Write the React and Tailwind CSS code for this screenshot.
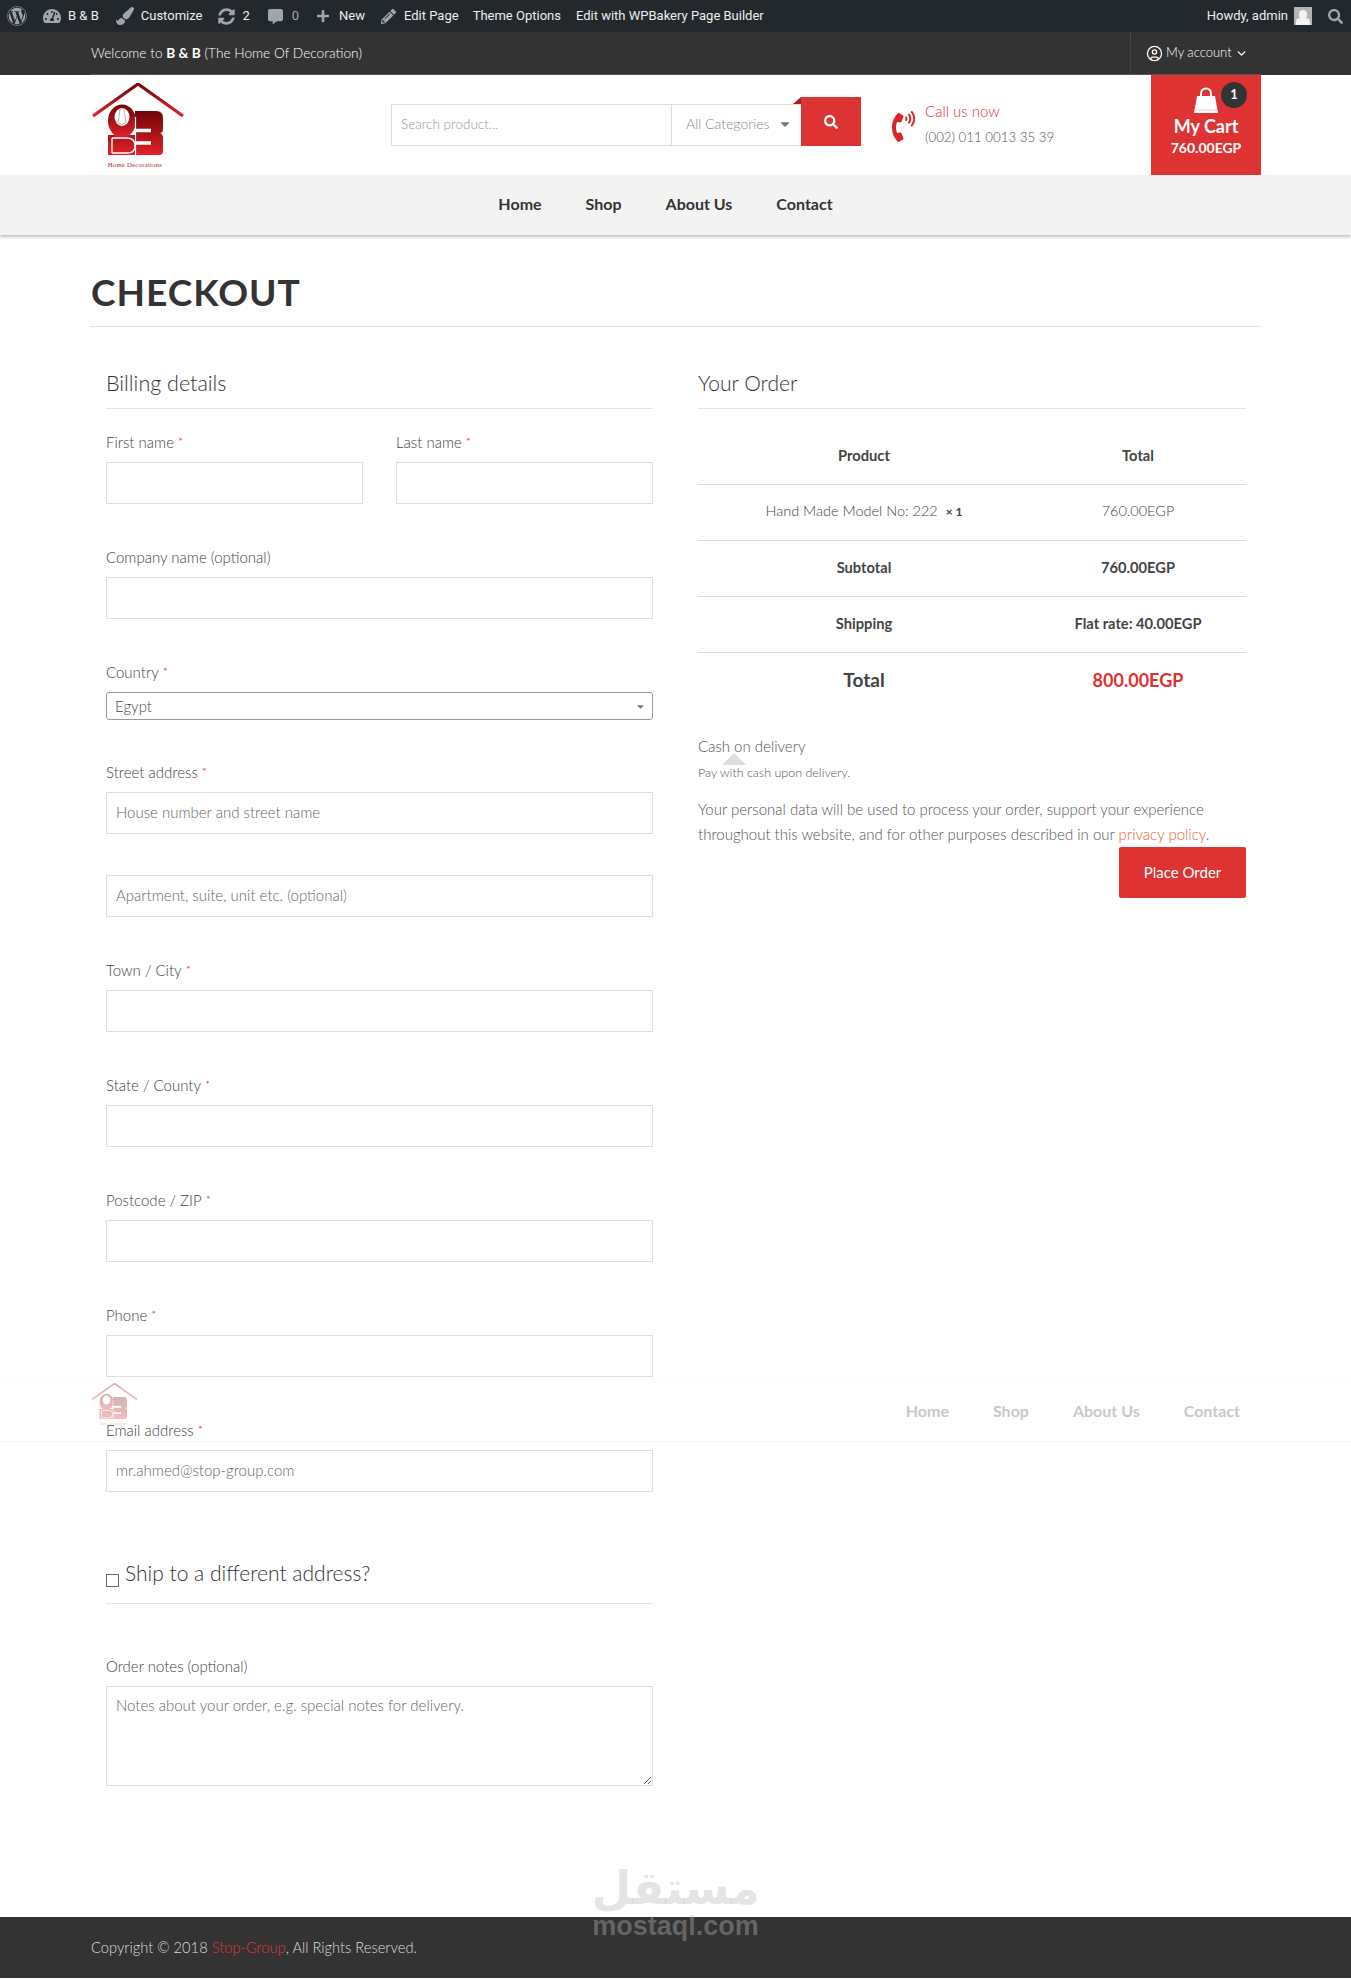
import React from 'react';
import { FaWordpress, FaTachometerAlt, FaPaintBrush, FaSyncAlt, FaCommentAlt, FaPlus, FaPencilAlt, FaSearch, FaPhoneVolume, FaCaretDown } from 'react-icons/fa';
import { CircleUser, ChevronDown } from 'lucide-react';

const inputCls = 'block w-full h-[42px] border border-[#dedede] bg-white px-[9px] pb-[2px] text-[15px] font-light text-[#666] placeholder:text-[#666] outline-none';

// Logo drawn from the header picture, used a second time faded in the sticky bar
const Logo = ({ id, className }) => (
    <svg viewBox="0 0 94 88" className={className}>
        <defs>
            <linearGradient id={id} x1="0" y1="0" x2="0" y2="1">
                <stop offset="0" stopColor="#6e0507" />
                <stop offset="1" stopColor="#e3212a" />
            </linearGradient>
        </defs>
        <path d="M2 33 L47 1 L92 33" fill="none" stroke={`url(#${id})`} strokeWidth="3.2" />
        <path d="M44 28 H65 Q72 28 72 35 V46 Q72 50 69 50 Q72 51 72 55 V68 Q72 72 68 72 H17 V52 H44 Z" fill={`url(#${id})`} />
        <ellipse cx="31" cy="38" rx="14" ry="16.5" fill={`url(#${id})`} />
        <ellipse cx="31" cy="34" rx="7.5" ry="9" fill="#fff" />
        <path d="M29 26 L27 40 Q31 43 35 40 L33 26 Z" fill="none" stroke="#aaa" strokeWidth="0.8" />
        <path d="M21 55 V70 M21 55 H36 Q44 55 44 63 Q44 70 36 70 H21" fill="none" stroke="#fff" strokeWidth="1.4" />
        <path d="M45 47.5 H60 M45 60 H60" stroke="#fff" strokeWidth="3.5" />
        <path d="M44.5 34 V72" stroke="#fff" strokeWidth="1.2" />
        <text x="44" y="84" textAnchor="middle" fontSize="6.6" letterSpacing="0.3" fill="#b3282d" fontFamily="'Liberation Serif', serif">Home Decorations</text>
    </svg>
);

const Field = ({ label, required, optional, className = 'mb-[43px]', children }) => (
    <div className={className}>
        <label className="block h-[22px] mb-2 text-[15px] leading-[20px] font-light text-[#444]">
            {label}
            {optional && ' (optional)'}
            {required && <span className="text-[#e01020] ml-1 relative top-[-2px] text-[12px]">*</span>}
        </label>
        {children || <input className={inputCls} />}
    </div>
);

const AdminBar = () => (
    <div className="h-[32px] bg-[#23282d] flex items-center text-[13px] text-[#eee] font-['Roboto',sans-serif]">
        <FaWordpress className="ml-[7px] text-[20px] text-[#a0a5aa]" />
        <FaTachometerAlt className="ml-[16px] text-[18px] text-[#a0a5aa]" />
        <span className="ml-[7px]">B &amp; B</span>
        <FaPaintBrush className="ml-[17px] text-[18px] text-[#a0a5aa]" />
        <span className="ml-[7px]">Customize</span>
        <FaSyncAlt className="ml-[16px] text-[17px] text-[#a0a5aa]" />
        <span className="ml-[7px]">2</span>
        <FaCommentAlt className="ml-[18px] text-[15px] text-[#a0a5aa]" />
        <span className="ml-[9px] text-[#a0a5aa]">0</span>
        <FaPlus className="ml-[17px] text-[14px] text-[#a0a5aa]" />
        <span className="ml-[9px]">New</span>
        <FaPencilAlt className="ml-[16px] text-[15px] text-[#a0a5aa]" />
        <span className="ml-[8px]">Edit Page</span>
        <span className="ml-[14px]">Theme Options</span>
        <span className="ml-[15px]">Edit with WPBakery Page Builder</span>
        <span className="ml-auto">Howdy, admin</span>
        <span className="relative ml-[6px] mr-px w-[18px] h-[18px] bg-[#b4b4b4] overflow-hidden">
            <span className="absolute left-[5px] top-[3px] w-[8px] h-[9px] rounded-full bg-[#f2f2f2]" />
            <span className="absolute left-[2px] top-[11px] w-[14px] h-[7px] rounded-t-[4px] bg-[#f2f2f2]" />
        </span>
        <FaSearch className="ml-[15px] mr-[8px] text-[15px] text-[#a0a5aa]" />
    </div>
);

const TopBar = () => (
    <div className="bg-[#333] h-[43px]">
        <div className="w-[1171px] mx-auto h-full flex items-center justify-between border-b border-[#555] text-[13.7px] text-white font-light">
            <span className="pl-px">Welcome to <b className="font-bold">B &amp; B</b> (The Home Of Decoration)</span>
            <span className="w-[131px] h-full border-l border-dotted border-[#555] flex items-center pl-[15px] gap-[3px]">
                <CircleUser size={17} strokeWidth={1.8} />
                <span className="text-[13px]">My account</span>
                <ChevronDown size={13} strokeWidth={2.5} />
            </span>
        </div>
    </div>
);

const CartBag = () => (
    <svg viewBox="0 0 26 28" className="w-[26px] h-[28px]">
        <path d="M8 12 V7 Q8 1.5 13 1.5 Q18 1.5 18 7 V12" fill="none" stroke="#fff" strokeWidth="2" />
        <path d="M4 9 H22 L25 26 H1 Z" fill="#fff" />
        <path d="M1.5 23 H24.5" stroke="#f6c8c8" strokeWidth="1" />
    </svg>
);

const Header = () => (
    <div className="w-[1171px] mx-auto h-[100px] flex">
        <Logo id="logo-main" className="w-[94px] h-[88px] mt-[8px] ml-px" />
        <div className="ml-[206px] mt-[22px] flex items-end h-[49px]">
            <div className="w-[281px] h-[42px] border border-[#e0dcd6] flex items-center pl-[9px] pb-[2px] text-[13.5px] font-light text-[#999]">Search product...</div>
            <div className="w-[129px] h-[42px] border-y border-[#e0dcd6] flex items-center pl-[14px] pb-[3px] text-[14px] font-light text-[#888]">
                All Categories
                <FaCaretDown className="ml-[8px] text-[#777] text-[14px]" />
            </div>
            <div className="relative w-[60px] h-[49px] bg-[#de3333] flex items-center justify-center text-white">
                <FaSearch className="text-[14px]" />
                <span className="absolute left-[-8px] top-0 w-0 h-0 border-l-[8px] border-l-transparent border-b-[7px] border-b-[#a81e1e]" />
            </div>
        </div>
        <div className="ml-[27px] mt-[25px] flex">
            <FaPhoneVolume className="text-[#d9252a] text-[31px] mt-[11px]" />
            <div className="ml-[6px] font-light">
                <div className="text-[15px] leading-[22px] text-[#e03535]">Call us now</div>
                <div className="text-[13.3px] leading-[22px] mt-[4px] text-[#555]">(002) 011 0013 35 39</div>
            </div>
        </div>
        <div className="ml-auto w-[110px] h-[100px] bg-[#de3333] text-white flex flex-col items-center pt-[12px] relative">
            <CartBag />
            <span className="absolute top-[7px] left-[70px] w-[26px] h-[26px] rounded-full bg-[#333] flex items-center justify-center text-[13px] font-bold">1</span>
            <div className="text-[18px] leading-[24px] font-bold -mt-px">My Cart</div>
            <div className="text-[14px] leading-[20px] font-bold">760.00EGP</div>
        </div>
    </div>
);

const NavLinks = ({ className }) => (
    <div className={className}>
        <span>Home</span>
        <span>Shop</span>
        <span>About Us</span>
        <span>Contact</span>
    </div>
);

const Billing = () => (
    <div className="w-[547px]">
        <h3 className="text-[21.5px] leading-[28px] font-light text-[#333] pb-[11px] border-b border-[#e8e4df] mb-[23px]">Billing details</h3>
        <div className="flex justify-between">
            <Field label="First name" required className="w-[257px] mb-[43px]" />
            <Field label="Last name" required className="w-[257px] mb-[43px]" />
        </div>
        <Field label="Company name" optional />
        <Field label="Country" required className="mb-[42px]">
            <div className="h-[28px] rounded-[3px] border border-[#999] flex items-center justify-between pl-[8px] pr-[6px] text-[15px] font-light text-[#444]">
                Egypt
                <FaCaretDown className="text-[11px] text-[#777]" />
            </div>
        </Field>
        <Field label="Street address" required className="mb-[41px]">
            <input className={inputCls} placeholder="House number and street name" />
        </Field>
        <input className={`${inputCls} mb-[43px]`} placeholder="Apartment, suite, unit etc. (optional)" />
        <Field label="Town / City" required />
        <Field label="State / County" required />
        <Field label="Postcode / ZIP" required />
        <Field label="Phone" required />
        <Field label="Email address" required className="mb-[62px]">
            <input className={inputCls} defaultValue="mr.ahmed@stop-group.com" />
        </Field>
        <div className="h-[50px] border-b border-[#e5e5e5] flex items-start mb-[52px]">
            <span className="block w-[13px] h-[13px] border border-[#666] mt-[20px] bg-white" />
            <span className="ml-[6px] mt-[5px] text-[21px] leading-[28px] font-light text-[#333]">Ship to a different address?</span>
        </div>
        <Field label="Order notes" optional className="mb-0">
            <textarea className="block w-full h-[100px] border border-[#dedede] px-[9px] py-[7px] text-[15px] font-light placeholder:text-[#666] outline-none" placeholder="Notes about your order, e.g. special notes for delivery." />
        </Field>
    </div>
);

const rows = [
    ['Subtotal', '760.00EGP'],
    ['Shipping', 'Flat rate: 40.00EGP'],
];

const OrderReview = () => (
    <div className="w-[548px]">
        <h3 className="text-[21px] leading-[28px] font-light text-[#333] pb-[11px] border-b border-[#e8e4df] mb-[18px]">Your Order</h3>
        <table className="w-full table-fixed text-center text-[14.7px] text-[#444]">
            <tbody>
                <tr className="h-[57px] border-b border-[#ddd] font-bold">
                    <td className="w-[332px]">Product</td>
                    <td>Total</td>
                </tr>
                <tr className="h-[56px] border-b border-[#ddd] font-light text-[#444]">
                    <td className="pb-[2px] text-[14.5px]">Hand Made Model No: 222 <b className="font-bold text-[12px] ml-1">× 1</b></td>
                    <td className="pb-[2px] text-[14.5px]">760.00EGP</td>
                </tr>
                {rows.map(([label, value]) => (
                    <tr key={label} className="h-[56px] border-b border-[#ddd] font-bold">
                        <td className="pb-[2px]">{label}</td>
                        <td className="pb-[2px]">{value}</td>
                    </tr>
                ))}
                <tr className="h-[56px] font-bold">
                    <td className="text-[19px]">Total</td>
                    <td className="text-[18px] text-[#de2f33]">800.00EGP</td>
                </tr>
            </tbody>
        </table>
        <div className="relative mt-[26px] font-light text-[#555]">
            <div className="text-[15px] leading-[24px]">Cash on delivery</div>
            <div className="text-[12.5px] leading-[20px] mt-[5px]">Pay with cash upon delivery.</div>
            <span className="absolute left-[24px] top-[19px] w-0 h-0 border-x-[12px] border-x-transparent border-b-[12px] border-b-[#ddd]" />
            <p className="text-[15px] leading-[25px] mt-[14px]">
                Your personal data will be used to process your order, support your experience
                throughout this website, and for other purposes described in our <span className="text-[#e8622c]">privacy policy</span>.
            </p>
            <div className="flex justify-end">
                <button className="w-[127px] h-[51px] rounded-[2px] bg-[#de3333] text-white text-[15px] font-normal">Place Order</button>
            </div>
        </div>
    </div>
);

// Faded copy of the sticky menu, frozen over the form in the screenshot
const StickyBar = () => (
    <div className="absolute left-0 top-[1380px] w-full h-[62px] border-t border-[#fbfbfb] border-b border-b-[#f5f5f5]">
        <div className="w-[1171px] mx-auto h-full flex items-start justify-between">
            <Logo id="logo-sticky" className="w-[47px] h-[44px] mt-[2px] ml-px opacity-30" />
            <NavLinks className="flex gap-[44px] mt-[18px] mr-[21px] text-[16px] font-bold text-[#c8c8c8]" />
        </div>
    </div>
);

const Watermark = () => (
    <div className="absolute left-[594px] top-[1858px] w-[163px] flex flex-col items-center text-[rgba(185,185,185,0.38)] pointer-events-none">
        <span className="text-[46px] leading-[60px] font-bold font-['DejaVu_Sans',sans-serif]">مستقل</span>
        <span className="-mt-[6px] text-[27px] leading-[28px] font-bold font-['Liberation_Sans',sans-serif]">mostaql.com</span>
    </div>
);

const App = () => (
    <div className="relative min-h-[1980px] bg-white font-['Lato',sans-serif]">
        <AdminBar />
        <TopBar />
        <Header />
        <div className="h-[60px] bg-[#f3f3f3] shadow-[0_2px_3px_rgba(0,0,0,0.25)] flex items-center justify-center">
            <NavLinks className="flex gap-[44px] mr-[20px] -mt-[2px] text-[16px] font-bold text-[#333]" />
        </div>
        <div className="w-[1171px] mx-auto">
            <h1 className="h-[92px] pt-[32px] pl-px border-b border-[#e5e5e5] text-[37px] leading-[50px] font-bold tracking-[1px] text-[#333]">CHECKOUT</h1>
            <div className="flex justify-between pl-[16px] pr-[15px] pt-[42px]">
                <Billing />
                <OrderReview />
            </div>
        </div>
        <div className="absolute left-0 top-[1917px] w-full h-[61px] bg-[#333]">
            <div className="w-[1171px] mx-auto h-full flex items-center pl-px text-[14.7px] font-light text-[#ddd]">
                <span>Copyright © 2018 <span className="text-[#e03535]">Stop-Group</span>, All Rights Reserved.</span>
            </div>
        </div>
        <StickyBar />
        <Watermark />
    </div>
);

export default App;
